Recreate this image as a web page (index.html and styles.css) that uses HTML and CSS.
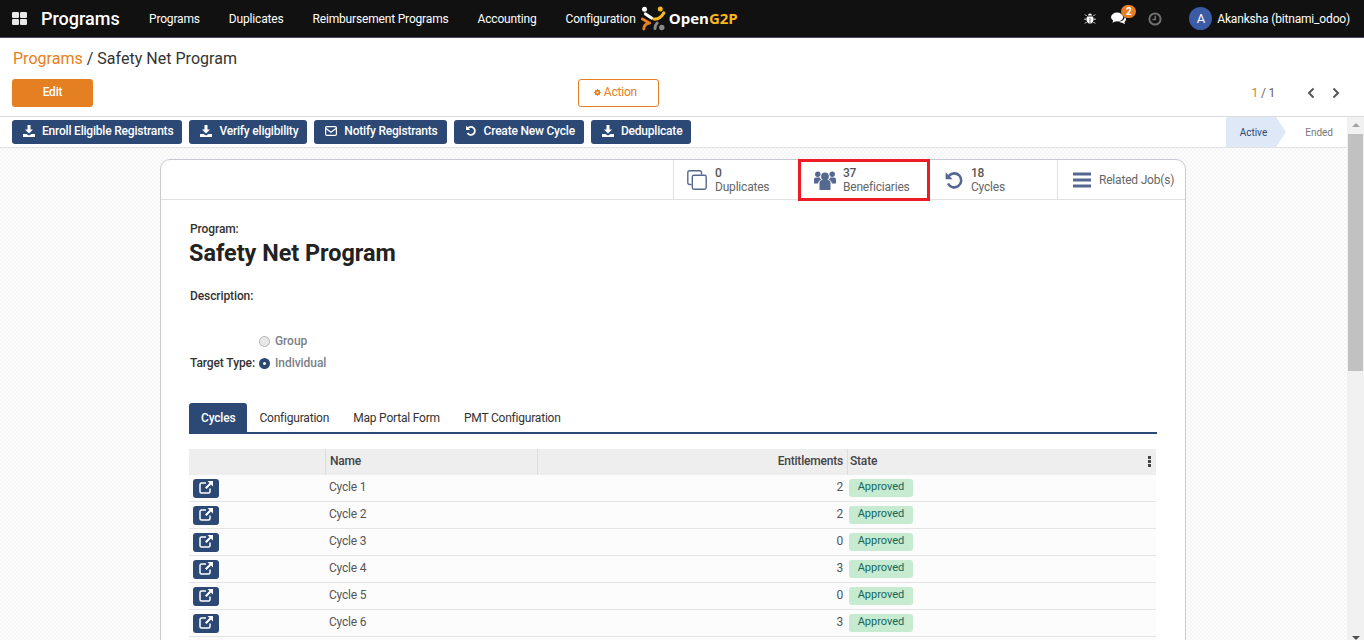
FILE: index.html
```html
<!DOCTYPE html>
<html lang="en">
<head>
    <meta charset="UTF-8">
    <meta name="viewport" content="width=device-width, initial-scale=1.0">
    <title>Safety Net Program</title>
    <link rel="stylesheet" href="styles.css">
</head>
<body>
    <header class="navbar">
        <svg class="apps-icon" viewBox="0 0 15 13"><rect width="7" height="6" rx="1.2"/><rect x="8" width="7" height="6" rx="1.2"/><rect y="7" width="7" height="6" rx="1.2"/><rect x="8" y="7" width="7" height="6" rx="1.2"/></svg>
        <span class="brand">Programs</span>
        <nav class="menu">
            <a>Programs</a>
            <a>Duplicates</a>
            <a>Reimbursement Programs</a>
            <a>Accounting</a>
            <a>Configuration</a>
        </nav>
        <div class="logo">
            <svg class="logo-mark" viewBox="0 0 25 25" fill="none" stroke-linecap="round">
                <circle cx="3.500" cy="3.300" r="2.500" fill="#fff"/>
                <path d="M4.500 8 10.500 12" stroke="#fff" stroke-width="3.200"/>
                <circle cx="19.300" cy="3" r="2.500" fill="#f5b81f"/>
                <path d="M13 13Q19 13.500 22.800 7" stroke="#f5b81f" stroke-width="3.200"/>
                <path d="M1.500 13 7.500 16.500M2.800 23Q3 18 8.500 17" stroke="#e67e22" stroke-width="3"/>
                <circle cx="20.800" cy="21.500" r="2.700" fill="#8a8a8a"/>
                <path d="M14 22.500Q14 19 16.200 17" stroke="#8a8a8a" stroke-width="3"/>
            </svg>
            <span class="logo-text">Open<span class="logo-accent">G2P</span></span>
        </div>
        <div class="systray">
            <svg class="bug-icon" viewBox="0 0 12 12"><path d="M4 2.600a2 2 0 0 1 4 0zM3.200 3.400h5.600c.6.8.8 1.600.8 2.600 0 2.600-1.400 4.600-3.300 4.800V5H5.700v5.800C3.800 10.600 2.400 8.600 2.400 6c0-1 .2-1.800.8-2.600z"/><path d="M2.500 3 1 1.500M9.500 3 11 1.500M2 6.200H.3M10 6.200h1.700M2.500 9 1 10.500M9.500 9 11 10.500" stroke="#fff" stroke-width="1" fill="none"/></svg>
            <span class="chat">
                <svg class="chat-icon" viewBox="0 0 16 13"><ellipse cx="6.500" cy="5" rx="6.500" ry="4.800"/><path d="M2.500 8 1.500 11 6 9z"/><path d="M14.500 4.500c1 1 1.500 1.900 1.500 2.900 0 1.200-.7 2.200-1.800 2.900l.8 2.200-3-1.600c-1.600.1-3-.3-4-1.100 3.800 0 6.800-2.200 6.500-5.300z"/></svg>
                <span class="badge">2</span>
            </span>
            <svg class="clock-icon" viewBox="0 0 14 14"><circle cx="7" cy="7" r="5.600" fill="none" stroke="#6f6f6f" stroke-width="2"/><path d="M7.300 3.800V7.500H4.400" fill="none" stroke="#6f6f6f" stroke-width="1.500"/></svg>
            <span class="avatar">A</span>
            <span class="username">Akanksha (bitnami_odoo)</span>
        </div>
    </header>

    <div class="control-panel">
        <div class="breadcrumb"><a>Programs</a> / Safety Net Program</div>
        <div class="cp-row">
            <button class="btn-edit">Edit</button>
            <button class="btn-action"><svg class="gear" viewBox="0 0 10 10"><circle cx="5" cy="5" r="2.600" fill="none" stroke="#e67e22" stroke-width="2.400"/><path d="M5 0v2M5 8v2M0 5h2M8 5h2M1.500 1.500l1.400 1.400M7.100 7.100l1.400 1.400M8.500 1.500 7.100 2.900M2.900 7.100 1.500 8.500" stroke="#e67e22" stroke-width="1.300"/></svg> Action</button>
            <div class="pager">
                <span class="pager-count"><b>1</b> / 1</span>
                <svg class="chev" viewBox="0 0 10 12"><path d="M7.500 1.500 3 6l4.500 4.500" fill="none" stroke="#555" stroke-width="2"/></svg>
                <svg class="chev" viewBox="0 0 10 12"><path d="M2.500 1.500 7 6l-4.500 4.500" fill="none" stroke="#555" stroke-width="2"/></svg>
            </div>
        </div>
    </div>

    <div class="workspace">
        <main class="content">
            <div class="statusbar">
                <div class="header-buttons">
                    <button class="btn-primary"><svg class="btn-icon" viewBox="0 0 12 12"><path d="M4.500 0h3v4.500H10L6 8.500 2 4.500h2.500zM0 9h3.500L6 10.500 8.500 9H12v3H0z"/></svg>Enroll Eligible Registrants</button>
                    <button class="btn-primary"><svg class="btn-icon" viewBox="0 0 12 12"><path d="M4.500 0h3v4.500H10L6 8.500 2 4.500h2.500zM0 9h3.500L6 10.500 8.500 9H12v3H0z"/></svg>Verify eligibility</button>
                    <button class="btn-primary"><svg class="btn-icon" viewBox="0 0 12 12"><rect x=".6" y="1.600" width="10.800" height="8.800" rx="1.200" fill="none" stroke="#fff" stroke-width="1.200"/><path d="M1 3.500 6 7.200l5-3.700" fill="none" stroke="#fff" stroke-width="1.200"/></svg>Notify Registrants</button>
                    <button class="btn-primary"><svg class="btn-icon" viewBox="0 0 12 12"><path d="M2.800 3.300A4 4 0 1 1 2.500 8" fill="none" stroke="#fff" stroke-width="1.800"/><path d="M1 .8V5h4.200z"/></svg>Create New Cycle</button>
                    <button class="btn-primary"><svg class="btn-icon" viewBox="0 0 12 12"><path d="M4.500 0h3v4.500H10L6 8.500 2 4.500h2.500zM0 9h3.500L6 10.500 8.500 9H12v3H0z"/></svg>Deduplicate</button>
                </div>
                <div class="stages">
                    <span class="stage stage-active">Active</span>
                    <span class="stage">Ended</span>
                </div>
            </div>

            <div class="sheet">
                <div class="button-box">
                    <div class="stat stat-dup">
                        <svg class="stat-icon icon-dup" viewBox="0 0 20 20"><path d="M4.500 14.500H2.500a1.700 1.700 0 0 1-1.700-1.700V2.500A1.700 1.700 0 0 1 2.500.8h10.300a1.700 1.700 0 0 1 1.700 1.700v2" fill="none" stroke="#55688f" stroke-width="1.400"/><rect x="5.300" y="5.300" width="13.900" height="13.900" rx="1.700" fill="none" stroke="#55688f" stroke-width="1.400"/></svg>
                        <div class="stat-text"><b>0</b><span>Duplicates</span></div>
                    </div>
                    <div class="stat stat-marked">
                        <svg class="stat-icon icon-group" viewBox="0 0 22 20"><circle cx="11" cy="6.500" r="3.900"/><path d="M5.500 13a3 3 0 0 1 3-3h5a3 3 0 0 1 3 3v7h-11z"/><circle cx="3.800" cy="4.300" r="2.700"/><circle cx="18.200" cy="4.300" r="2.700"/><path d="M0 9.500a2 2 0 0 1 2-2h3.800c.3 1 .8 1.700 1.500 2.200-1.800.4-3 1.800-3.200 3.800H0zM22 9.500a2 2 0 0 0-2-2h-3.800c-.3 1-.8 1.700-1.500 2.200 1.800.4 3 1.800 3.200 3.800H22z"/></svg>
                        <div class="stat-text"><b>37</b><span>Beneficiaries</span></div>
                    </div>
                    <div class="stat stat-cycles">
                        <svg class="stat-icon" viewBox="0 0 18 18"><path d="M3.600 5.200A7 7 0 1 1 3 12.500" fill="none" stroke="#55688f" stroke-width="2.600"/><path d="M.6 1.200v7h7z" fill="#55688f"/></svg>
                        <div class="stat-text"><b>18</b><span>Cycles</span></div>
                    </div>
                    <div class="stat stat-jobs">
                        <svg class="stat-icon" viewBox="0 0 18 15"><path d="M0 0h18v3H0zM0 6h18v3H0zM0 12h18v3H0z" fill="#55688f"/></svg>
                        <div class="stat-text"><span>Related Job(s)</span></div>
                    </div>
                </div>

                <div class="sheet-body">
                    <div class="field-label">Program:</div>
                    <h1 class="title">Safety Net Program</h1>
                    <div class="field-label description">Description:</div>

                    <div class="target-type">
                        <div class="field-label target-label">Target Type:</div>
                        <div class="radio-list">
                            <div class="radio"><span class="radio-dot"></span>Group</div>
                            <div class="radio"><span class="radio-dot radio-on"></span>Individual</div>
                        </div>
                    </div>

                    <div class="tabs">
                        <a class="tab tab-active">Cycles</a>
                        <a class="tab">Configuration</a>
                        <a class="tab">Map Portal Form</a>
                        <a class="tab">PMT Configuration</a>
                    </div>

                    <table class="cycles">
                        <thead>
                            <tr>
                                <th class="col-open"></th>
                                <th class="col-name">Name</th>
                                <th class="col-ent">Entitlements</th>
                                <th class="col-state">State<span class="kebab"></span></th>
                            </tr>
                        </thead>
                        <tbody>
                            <tr><td><button class="btn-open"><svg viewBox="0 0 14 13"><path d="M11 7.500v3a1.500 1.500 0 0 1-1.500 1.500h-7A1.500 1.500 0 0 1 1 10.500v-7A1.500 1.500 0 0 1 2.500 2H7" fill="none" stroke="#fff" stroke-width="1.500"/><path d="M8.500 0H14v5.500l-2-2L7.500 8 6 6.500 10.500 2z" fill="#fff"/></svg></button></td><td>Cycle 1</td><td class="num">2</td><td><span class="tag">Approved</span></td></tr>
                            <tr><td><button class="btn-open"><svg viewBox="0 0 14 13"><path d="M11 7.500v3a1.500 1.500 0 0 1-1.500 1.500h-7A1.500 1.500 0 0 1 1 10.500v-7A1.500 1.500 0 0 1 2.500 2H7" fill="none" stroke="#fff" stroke-width="1.500"/><path d="M8.500 0H14v5.500l-2-2L7.500 8 6 6.500 10.500 2z" fill="#fff"/></svg></button></td><td>Cycle 2</td><td class="num">2</td><td><span class="tag">Approved</span></td></tr>
                            <tr><td><button class="btn-open"><svg viewBox="0 0 14 13"><path d="M11 7.500v3a1.500 1.500 0 0 1-1.500 1.500h-7A1.500 1.500 0 0 1 1 10.500v-7A1.500 1.500 0 0 1 2.500 2H7" fill="none" stroke="#fff" stroke-width="1.500"/><path d="M8.500 0H14v5.500l-2-2L7.500 8 6 6.500 10.500 2z" fill="#fff"/></svg></button></td><td>Cycle 3</td><td class="num">0</td><td><span class="tag">Approved</span></td></tr>
                            <tr><td><button class="btn-open"><svg viewBox="0 0 14 13"><path d="M11 7.500v3a1.500 1.500 0 0 1-1.500 1.500h-7A1.500 1.500 0 0 1 1 10.500v-7A1.500 1.500 0 0 1 2.500 2H7" fill="none" stroke="#fff" stroke-width="1.500"/><path d="M8.500 0H14v5.500l-2-2L7.500 8 6 6.500 10.500 2z" fill="#fff"/></svg></button></td><td>Cycle 4</td><td class="num">3</td><td><span class="tag">Approved</span></td></tr>
                            <tr><td><button class="btn-open"><svg viewBox="0 0 14 13"><path d="M11 7.500v3a1.500 1.500 0 0 1-1.500 1.500h-7A1.500 1.500 0 0 1 1 10.500v-7A1.500 1.500 0 0 1 2.500 2H7" fill="none" stroke="#fff" stroke-width="1.500"/><path d="M8.500 0H14v5.500l-2-2L7.500 8 6 6.500 10.500 2z" fill="#fff"/></svg></button></td><td>Cycle 5</td><td class="num">0</td><td><span class="tag">Approved</span></td></tr>
                            <tr><td><button class="btn-open"><svg viewBox="0 0 14 13"><path d="M11 7.500v3a1.500 1.500 0 0 1-1.500 1.500h-7A1.500 1.500 0 0 1 1 10.500v-7A1.500 1.500 0 0 1 2.500 2H7" fill="none" stroke="#fff" stroke-width="1.500"/><path d="M8.500 0H14v5.500l-2-2L7.500 8 6 6.500 10.500 2z" fill="#fff"/></svg></button></td><td>Cycle 6</td><td class="num">3</td><td><span class="tag">Approved</span></td></tr>
                            <tr><td></td><td></td><td></td><td></td></tr>
                        </tbody>
                    </table>
                </div>
            </div>
        </main>
        <div class="scrollbar">
            <span class="arrow-up"></span>
            <span class="thumb"></span>
            <span class="arrow-down"></span>
        </div>
    </div>
</body>
</html>
```
FILE: styles.css
```css
* {
    box-sizing: border-box;
}
html, body {
    height: 100%;
}
body {
    margin: 0;
    font-family: Roboto, Arial, sans-serif;
    font-size: 12px;
    letter-spacing: -0.2px;
    color: #333;
    background-color: #fff;
    display: flex;
    flex-direction: column;
    overflow: hidden;
}
button {
    font-family: inherit;
    letter-spacing: inherit;
    cursor: pointer;
}

/* top bar */
.navbar {
    height: 38px;
    flex: none;
    display: flex;
    align-items: center;
    background-color: #111;
    border-bottom: 1px solid #4b4763;
    color: #fff;
    padding-left: 12px;
}
.apps-icon {
    width: 15px;
    height: 13px;
    fill: #e9e9e9;
}
.brand {
    font-size: 18px;
    font-weight: 500;
    letter-spacing: 0;
    margin-left: 14px;
    width: 108px;
}
.menu {
    display: flex;
    gap: 29px;
    letter-spacing: -0.17px;
}
.logo {
    display: flex;
    align-items: center;
    margin-left: 5px;
}
.logo-mark {
    width: 25px;
    height: 25px;
}
.logo-text {
    font-family: "Open Sans", sans-serif;
    font-weight: 700;
    font-size: 15px;
    letter-spacing: 0;
    margin: 0 0 2px 3px;
}
.logo-accent {
    color: #f5b81f;
}
.systray {
    margin-left: auto;
    display: flex;
    align-items: center;
    padding-right: 14px;
}
.bug-icon {
    width: 12px;
    height: 12px;
    fill: #fff;
}
.chat {
    position: relative;
    margin-left: 15px;
    display: flex;
}
.chat-icon {
    width: 15px;
    height: 13px;
    fill: #fff;
}
.badge {
    position: absolute;
    left: 10px;
    top: -7px;
    width: 15px;
    height: 13px;
    border-radius: 7px;
    background-color: #e67e22;
    color: #fff;
    font-size: 10px;
    font-weight: 700;
    line-height: 13px;
    text-align: center;
}
.clock-icon {
    width: 14px;
    height: 14px;
    margin-left: 22px;
}
.avatar {
    width: 23px;
    height: 23px;
    border-radius: 50%;
    background-color: #3b5ba5;
    margin-left: 27px;
    text-align: center;
    font-size: 13px;
    line-height: 23px;
}
.username {
    margin-left: 5px;
    letter-spacing: -0.17px;
}

/* breadcrumb and edit row */
.control-panel {
    flex: none;
    height: 78px;
    padding: 11px 12px 0;
}
.breadcrumb {
    font-size: 16px;
    letter-spacing: 0.02px;
    line-height: 20px;
    color: #333;
    padding-left: 1px;
}
.breadcrumb a {
    color: #e67e22;
}
.cp-row {
    display: grid;
    grid-template-columns: 566px 81px 1fr;
    align-items: center;
    margin-top: 10px;
}
.btn-edit {
    width: 81px;
    height: 28px;
    border: 0;
    border-radius: 3px;
    background-color: #e58022;
    color: #fff;
    font-size: 12px;
    font-weight: 500;
    padding: 0 0 3px;
}
.btn-action {
    width: 81px;
    height: 28px;
    background-color: #fff;
    border: 1px solid #e67e22;
    border-radius: 3px;
    color: #e67e22;
    font-size: 12px;
    padding: 0 6px 2px 0;
}
.gear {
    width: 7px;
    height: 7px;
}
.pager {
    display: flex;
    justify-content: flex-end;
    align-items: center;
    color: #666;
    padding-right: 11px;
}
.pager-count {
    margin-right: 31px;
}
.pager-count b {
    font-weight: 400;
    color: #c7813f;
}
.chev {
    width: 10px;
    height: 12px;
    margin-left: 15px;
}
.chev:first-of-type {
    margin-left: 0;
}

/* scroll area */
.workspace {
    flex: 1;
    min-height: 0;
    display: flex;
    border-top: 1px solid #dcdcdc;
}
.content {
    flex: 1;
    min-width: 0;
    overflow: hidden;
    background-color: #fafafa;
    background-image: conic-gradient(#f6f6f6 25%, #fdfdfd 0 50%, #f6f6f6 0 75%, #fdfdfd 0);
    background-size: 4px 4px;
}
.scrollbar {
    width: 17px;
    flex: none;
    background-color: #f1f1f1;
    display: flex;
    flex-direction: column;
    align-items: center;
    padding-top: 6px;
}
.arrow-up {
    border: 4px solid transparent;
    border-top: 0;
    border-bottom: 4px solid #a3a3a3;
}
.thumb {
    width: 15px;
    height: 237px;
    background-color: #c1c1c1;
    margin-top: 7px;
}
.arrow-down {
    border: 4px solid transparent;
    border-bottom: 0;
    border-top: 4px solid #505050;
    margin-top: auto;
}
.statusbar {
    height: 31px;
    display: flex;
    justify-content: space-between;
    background-color: #fff;
    border-bottom: 1px solid #e2e2e2;
    padding-left: 12px;
}
.header-buttons {
    display: flex;
    gap: 7px;
    padding-top: 3px;
}
.btn-primary {
    height: 24px;
    display: flex;
    align-items: center;
    border: 0;
    border-radius: 3px;
    background-color: #2c4875;
    color: #fff;
    font-size: 12px;
    font-weight: 500;
    padding: 0 9px 2px 11px;
}
.btn-icon {
    width: 12px;
    height: 12px;
    fill: #fff;
    margin-right: 7px;
}
.stages {
    display: flex;
    font-size: 10px;
    letter-spacing: 0;
    color: #777;
}
.stage {
    display: flex;
    align-items: center;
    padding: 0 14px 0 19px;
}
.stage-active {
    position: relative;
    background-color: #dfe8f6;
    color: #2c4875;
    padding: 0 9px 0 14px;
    margin-right: 10px;
}
.stage-active::after {
    content: "";
    position: absolute;
    left: 100%;
    top: 0;
    border-left: 10px solid #dfe8f6;
    border-top: 15px solid transparent;
    border-bottom: 15px solid transparent;
}

/* form sheet */
.sheet {
    width: 1026px;
    margin: 11px 0 0 160px;
    background-color: #fff;
    border: 1px solid #c9c9d4;
    border-radius: 10px 10px 0 0;
}
.button-box {
    height: 40px;
    display: flex;
    justify-content: flex-end;
    padding-right: 1px;
    border-bottom: 1px solid #e2e2e2;
}
.stat {
    height: 39px;
    display: flex;
    align-items: center;
    border-left: 1px solid #e2e2e2;
    color: #666;
    padding-left: 15px;
}
.stat-dup {
    width: 126px;
    padding-left: 13px;
}
.stat-cycles {
    width: 128px;
}
.stat-jobs {
    width: 127px;
}
.stat-marked {
    width: 132px;
    height: 42px;
    margin: -1px -1px 0;
    padding-left: 13px;
    border: 3px solid #ed1c24;
    position: relative;
}
.stat-icon {
    width: 18px;
    height: 20px;
    margin-right: 8px;
    flex: none;
}
.icon-dup {
    width: 20px;
}
.icon-group {
    width: 22px;
    fill: #55688f;
    margin-right: 7px;
}
.stat-text {
    display: flex;
    flex-direction: column;
    line-height: 14px;
}
.stat-text b {
    font-weight: 500;
    color: #555;
}
.sheet-body {
    padding: 21px 28px 0;
}
.field-label {
    font-weight: 500;
    color: #333;
    line-height: 16px;
    letter-spacing: -0.1px;
    padding-left: 1px;
}
.title {
    margin: 1px 0 0;
    font-size: 23.4px;
    font-weight: 700;
    letter-spacing: 0;
    line-height: 30px;
    color: #222;
}
.description {
    margin-top: 20px;
}
.target-type {
    display: flex;
    align-items: flex-end;
    margin-top: 26px;
}
.target-label {
    margin-bottom: 3px;
}
.radio-list {
    margin-left: 4px;
}
.radio {
    display: flex;
    align-items: center;
    height: 22px;
    font-weight: 500;
    letter-spacing: -0.05px;
    color: #7a7f87;
}
.radio-dot {
    width: 11px;
    height: 11px;
    border-radius: 50%;
    border: 1px solid #b5b5b5;
    background-color: #e8e8e8;
    margin-right: 5px;
}
.radio-on {
    border: 4px solid #2c4875;
    background-color: #fff;
}
.tabs {
    display: flex;
    margin-top: 29px;
    border-bottom: 2px solid #2c4875;
    height: 31px;
}
.tab {
    display: flex;
    align-items: center;
    padding: 0 12px;
    color: #333;
    border-radius: 3px 3px 0 0;
}
.tab-active {
    background-color: #2c4875;
    color: #fff;
    font-weight: 500;
}

/* cycles list */
.cycles {
    width: 967px;
    margin-top: 15px;
    border-collapse: separate;
    border-spacing: 0;
    table-layout: fixed;
}
.cycles th {
    height: 26px;
    background-color: #eee;
    font-weight: 500;
    text-align: left;
    color: #444;
    padding: 0 3px 3px;
    border-left: 1px solid #dcdcdc;
    position: relative;
}
.cycles th:first-child {
    border-left: 0;
}
.cycles th.col-name {
    padding-left: 4px;
}
.col-open {
    width: 136px;
}
.col-name {
    width: 212px;
}
.cycles th.col-ent {
    width: 310px;
    text-align: right;
    padding-right: 4px;
}
.cycles th.col-state {
    padding-left: 2px;
}
.kebab {
    position: absolute;
    right: 5px;
    top: 7px;
    width: 3px;
    height: 3px;
    background-color: #444;
    box-shadow: 0 4px 0 #444, 0 8px 0 #444;
}
.cycles td {
    height: 27px;
    padding: 0 2px 2px 4px;
    background-color: #fcfcfc;
    border-bottom: 1px solid #e4e4e4;
    color: #555;
}
.cycles td.num {
    text-align: right;
    padding-right: 4px;
}
.cycles td:last-child {
    padding-left: 2px;
}
.btn-open {
    display: block;
    width: 26px;
    height: 19px;
    margin-top: 2px;
    border: 0;
    border-radius: 3px;
    background-color: #2c4875;
    padding: 0;
}
.btn-open svg {
    display: block;
    width: 14px;
    height: 13px;
    margin: 0 auto 2px;
}
.tag {
    display: block;
    width: 64px;
    height: 18px;
    margin-top: 2px;
    background-color: #c6ebd0;
    border-radius: 3px;
    color: #14655a;
    font-size: 11px;
    letter-spacing: 0;
    line-height: 15px;
    text-align: center;
}
```
